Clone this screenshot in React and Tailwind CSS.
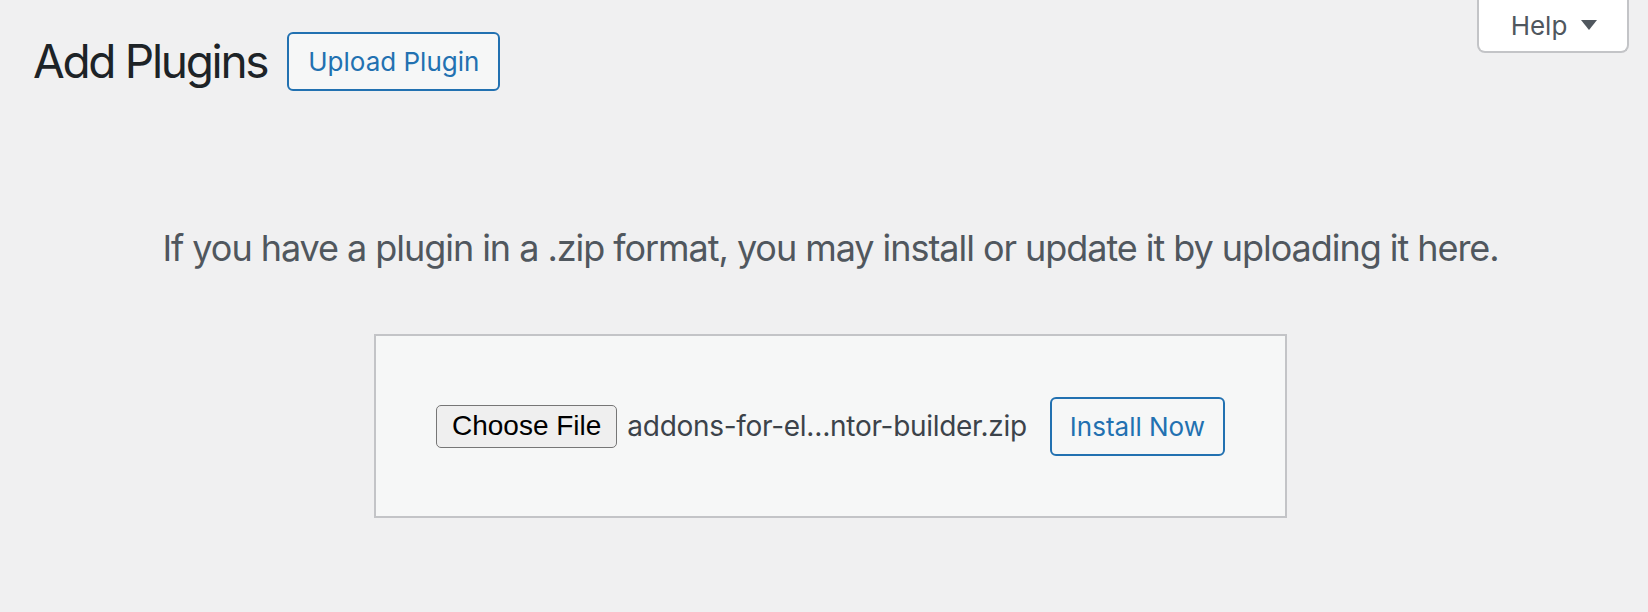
import React from 'react';

const sans = "font-['Inter','Noto_Sans',sans-serif]";

export default function App() {
    return (
        <div className={`relative min-h-[612px] w-full bg-[#f0f0f1] ${sans}`}>
            <div className="absolute right-[19px] top-0">
                <button className="flex h-[53px] w-[152px] items-center justify-center gap-[14px] rounded-b-[8px] border-2 border-t-0 border-[#c3c4c7] bg-white pl-[2px] text-[26px] text-[#50575e]">
                    <span>Help</span>
                    <svg width="16" height="10" viewBox="0 0 16 10" className="mt-[-2px]">
                        <path d="M0 0 L16 0 L8 10 Z" fill="#50575e" />
                    </svg>
                </button>
            </div>

            <div className="pl-[33px] pr-[20px]">
                <div className="flex items-center gap-[20px] pt-[32px]">
                    <h1 className="text-[46px] font-normal leading-[59px] tracking-[-2.3px] text-[#1d2327]">Add Plugins</h1>
                    <button className="h-[59px] rounded-[6px] border-2 border-[#2271b1] bg-[#f6f7f7] px-[19px] text-[26px] text-[#2271b1]">
                        Upload Plugin
                    </button>
                </div>

                <p className="mt-[132px] text-center text-[36px] leading-[50px] tracking-[-1.05px] text-[#50575e]">
                    If you have a plugin in a .zip format, you may install or update it by uploading it here.
                </p>

                <div className="mx-auto mt-[61px] flex h-[184px] w-[913px] items-center justify-center border-2 border-[#c3c4c7] bg-[#f6f7f7]">
                    <div className="flex items-center">
                        <span className="flex h-[43px] items-center rounded-[5px] border border-[#767676] bg-[#efefef] px-[15px] font-['Liberation_Sans',Arial,sans-serif] text-[28px] text-black">
                            Choose File
                        </span>
                        <span className="ml-[10px] text-[28px] tracking-[-0.3px] text-[#3c434a]">addons-for-el…ntor-builder.zip</span>
                        <button className="ml-[23px] h-[59px] rounded-[6px] border-2 border-[#2271b1] bg-[#f6f7f7] px-[18px] text-[26px] text-[#2271b1]">
                            Install Now
                        </button>
                    </div>
                </div>
            </div>
        </div>
    );
}
